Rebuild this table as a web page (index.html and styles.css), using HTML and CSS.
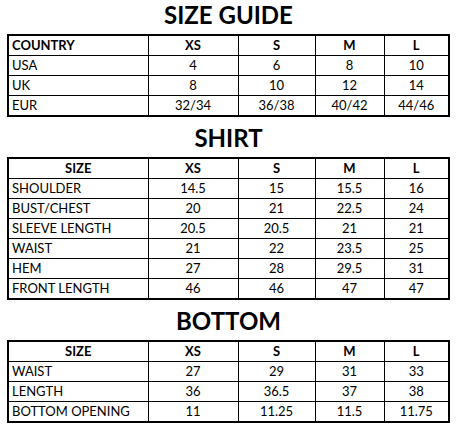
FILE: index.html
```html
<!DOCTYPE html>
<html lang="en">
<head>
<meta charset="utf-8">
<title>Size Guide</title>
<link rel="stylesheet" href="styles.css">
</head>
<body>
<div class="guide">
  <h1 class="title">SIZE GUIDE</h1>
  <table class="chart">
    <colgroup><col class="c1"><col class="c2"><col class="c3"><col class="c4"><col class="c5"></colgroup>
    <thead>
      <tr><th class="lead left">COUNTRY</th><th>XS</th><th>S</th><th>M</th><th>L</th></tr>
    </thead>
    <tbody>
      <tr><td class="lead">USA</td><td>4</td><td>6</td><td>8</td><td>10</td></tr>
      <tr><td class="lead">UK</td><td>8</td><td>10</td><td>12</td><td>14</td></tr>
      <tr><td class="lead">EUR</td><td>32/34</td><td>36/38</td><td>40/42</td><td>44/46</td></tr>
    </tbody>
  </table>

  <h1 class="title">SHIRT</h1>
  <table class="chart">
    <colgroup><col class="c1"><col class="c2"><col class="c3"><col class="c4"><col class="c5"></colgroup>
    <thead>
      <tr><th>SIZE</th><th>XS</th><th>S</th><th>M</th><th>L</th></tr>
    </thead>
    <tbody>
      <tr><td class="lead">SHOULDER</td><td>14.5</td><td>15</td><td>15.5</td><td>16</td></tr>
      <tr><td class="lead">BUST/CHEST</td><td>20</td><td>21</td><td>22.5</td><td>24</td></tr>
      <tr><td class="lead">SLEEVE LENGTH</td><td>20.5</td><td>20.5</td><td>21</td><td>21</td></tr>
      <tr><td class="lead">WAIST</td><td>21</td><td>22</td><td>23.5</td><td>25</td></tr>
      <tr><td class="lead">HEM</td><td>27</td><td>28</td><td>29.5</td><td>31</td></tr>
      <tr><td class="lead">FRONT LENGTH</td><td>46</td><td>46</td><td>47</td><td>47</td></tr>
    </tbody>
  </table>

  <h1 class="title">BOTTOM</h1>
  <table class="chart">
    <colgroup><col class="c1"><col class="c2"><col class="c3"><col class="c4"><col class="c5"></colgroup>
    <thead>
      <tr><th>SIZE</th><th>XS</th><th>S</th><th>M</th><th>L</th></tr>
    </thead>
    <tbody>
      <tr><td class="lead">WAIST</td><td>27</td><td>29</td><td>31</td><td>33</td></tr>
      <tr><td class="lead">LENGTH</td><td>36</td><td>36.5</td><td>37</td><td>38</td></tr>
      <tr><td class="lead">BOTTOM OPENING</td><td>11</td><td>11.25</td><td>11.5</td><td>11.75</td></tr>
    </tbody>
  </table>
</div>
</body>
</html>
```

FILE: styles.css
```css
html, body {
  margin: 0;
  padding: 0;
  background: #ffffff;
}

body {
  font-family: Lato, "Liberation Sans", sans-serif;
  color: #000000;
}

.guide {
  width: 443px;
  padding-left: 7px;
  display: flex;
  flex-direction: column;
}

.title {
  margin: 0 0 4px 0;
  font-size: 24px;
  line-height: 30px;
  font-weight: 700;
  text-align: center;
  letter-spacing: 0;
}

.chart + .title {
  margin-top: 6px;
}

.chart {
  width: 443px;
  table-layout: fixed;
  border-collapse: collapse;
  border: 2px solid #000;
  font-size: 13px;
}

.c1 { width: 140px; }
.c2 { width: 90px; }
.c3 { width: 77px; }
.c4 { width: 69px; }
.c5 { width: 65px; }

.chart th,
.chart td {
  border: 1px solid #000;
  height: 19px;
  padding: 0 3px;
  text-align: center;
  line-height: 19px;
  white-space: nowrap;
}

.chart th {
  font-weight: 700;
}

.chart .lead {
  text-align: left;
}

.chart th.lead {
  text-align: left;
}
```
